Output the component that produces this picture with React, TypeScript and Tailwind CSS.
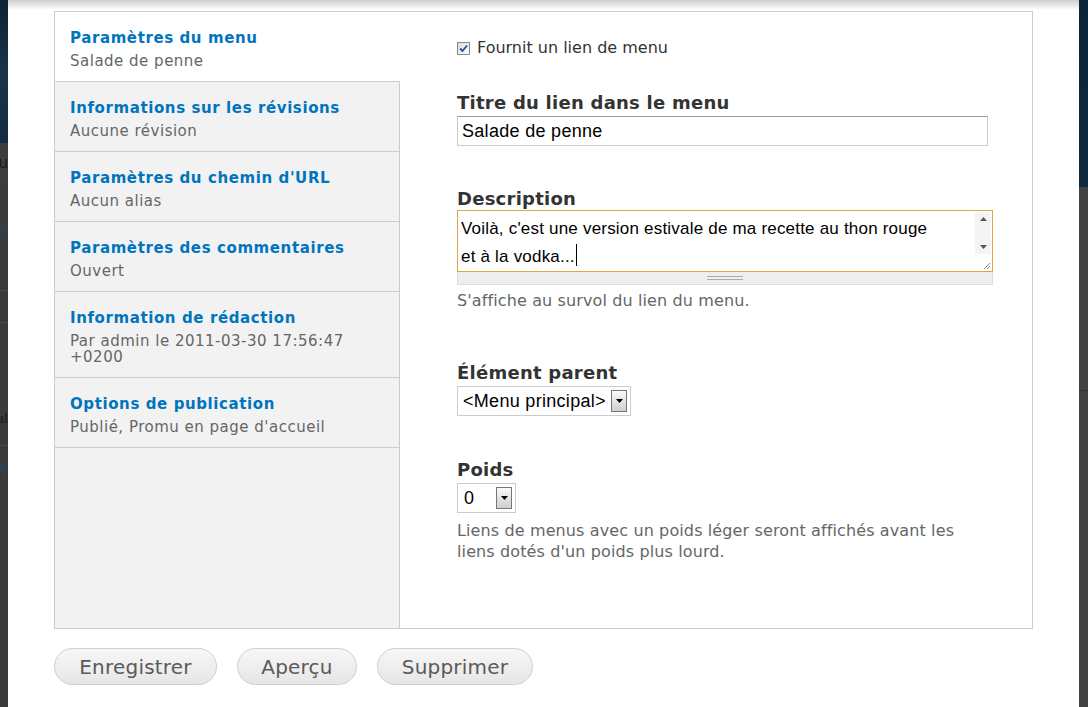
import React from "react";

const tabs = [
  { title: "Paramètres du menu", summary: ["Salade de penne"], active: true },
  { title: "Informations sur les révisions", summary: ["Aucune révision"] },
  { title: "Paramètres du chemin d'URL", summary: ["Aucun alias"] },
  { title: "Paramètres des commentaires", summary: ["Ouvert"] },
  { title: "Information de rédaction", summary: ["Par admin le 2011-03-30 17:56:47", "+0200"] },
  { title: "Options de publication", summary: ["Publié, Promu en page d'accueil"] },
];

function DropBtn() {
  return (
    <div className="flex h-[22px] w-[16px] items-center justify-center border border-[#777] bg-gradient-to-b from-[#fafafa] to-[#cfcfcf]">
      <svg width="7" height="4" viewBox="0 0 7 4">
        <path d="M0 0h7L3.5 4z" fill="#000" />
      </svg>
    </div>
  );
}

export default function App() {
  const sans = { fontFamily: '"DejaVu Sans", Verdana, sans-serif' };
  const arial = { fontFamily: '"Liberation Sans", Arial, sans-serif' };
  const serif = { fontFamily: '"Liberation Serif", serif' };
  return (
    <div className="flex h-[707px] w-[1088px] overflow-hidden" style={sans}>
      {/* left background strip */}
      <div className="flex w-[8px] flex-col overflow-hidden">
        <div className="h-[143px] bg-gradient-to-b from-[#0c2235] via-[#1a3347] to-[#132b40]" />
        <div className="flex h-[40px] items-center justify-end overflow-hidden bg-[#3d3d3d]">
          <span className="whitespace-nowrap text-[15px] text-[#1a1a1a]">Menu</span>
        </div>
        <div className="flex h-[107px] items-start justify-end overflow-hidden bg-[#3b3b3b] pt-[35px]">
          <span className="whitespace-nowrap text-[15px] text-[#1d4a6e]" style={serif}>Modifier</span>
        </div>
        <div className="h-[32px] border-t border-[#4a4a4a] bg-[#3b3b3b]" />
        <div className="flex h-[123px] items-end justify-end overflow-hidden border-t border-[#4a4a4a] bg-[#3b3b3b] pb-[16px]">
          <span className="whitespace-nowrap text-[15px] text-[#1a1a1a]" style={serif}>Sal</span>
        </div>
        <div className="flex flex-1 items-start justify-end overflow-hidden border-t border-[#4a4a4a] bg-[#3b3b3b] pt-[13px]">
          <span className="whitespace-nowrap text-[15px] text-[#1d4a6e]" style={serif}>A</span>
        </div>
      </div>

      {/* modal */}
      <div className="relative flex w-[1071px] flex-col bg-white pl-[46px] pt-[11px]">
        <div className="pointer-events-none absolute left-0 right-0 top-0 h-[10px] bg-gradient-to-b from-[#cfcfcf] to-white" />

        {/* vertical tabs box */}
        <div className="relative flex h-[618px] w-[979px] border border-[#cccccc] bg-white">
          {/* tab list */}
          <div className="flex w-[345px] flex-col bg-[#f2f2f2]">
            {tabs.map((t) => (
              <div
                key={t.title}
                className={
                  t.active
                    ? "border-b border-[#cccccc] bg-white pb-[12px] pl-[15px] pr-[10px] pt-[16px]"
                    : "border-b border-r border-[#cccccc] bg-[#f2f2f2] pb-[12px] pl-[15px] pr-[10px] pt-[16px]"
                }
              >
                <div className="whitespace-nowrap text-[15px] font-bold leading-[20px] tracking-[0.6px] text-[#0074bd]">{t.title}</div>
                <div className="mt-[5px] text-[15px] leading-[16px] tracking-[0.5px] text-[#666666]">
                  {t.summary.map((s) => (
                    <div key={s}>{s}</div>
                  ))}
                </div>
              </div>
            ))}
            <div className="flex-1 border-r border-[#cccccc]" />
          </div>

          {/* pane */}
          <div className="flex flex-1 flex-col pl-[57px] pt-[26px]">
            <div className="flex h-[20px] items-center gap-[7px]">
              <div className="flex h-[13px] w-[13px] items-center justify-center border border-[#8a8a8a] bg-gradient-to-br from-[#dcdcdc] to-[#fbfbfb]">
                <svg width="9" height="9" viewBox="0 0 9 9">
                  <path d="M1 4.5l2.5 2.5L8 1.5" stroke="#2a4a9c" strokeWidth="1.8" fill="none" />
                </svg>
              </div>
              <span className="text-[16px] text-[#333333]">Fournit un lien de menu</span>
            </div>

            <div className="mt-[34px] text-[18px] font-bold leading-[22px] tracking-[0.25px] text-[#333333]">Titre du lien dans le menu</div>
            <div
              className="mt-[2px] flex h-[30px] w-[531px] items-center border border-[#cccccc] border-t-[#999999] px-[4px] text-[18px] tracking-[0.3px] text-black"
              style={arial}
            >
              Salade de penne
            </div>

            <div className="mt-[42px] text-[18px] font-bold leading-[22px] tracking-[0.25px] text-[#333333]">Description</div>
            <div className="relative h-[62px] w-[536px] border border-[#e3a647]">
              <div className="pl-[3px] pr-[50px] pt-[4px] text-[17px] leading-[28px] tracking-[0.2px] text-black" style={arial}>
                Voilà, c'est une version estivale de ma recette au thon rouge et à la vodka...
                <span className="ml-[1px] inline-block h-[22px] w-[1px] bg-black align-[-4px]" />
              </div>
              {/* scrollbar */}
              <div className="absolute right-[1px] top-[1px] flex h-[42px] w-[16px] flex-col justify-between bg-[#f4f4f4]">
                <div className="flex h-[14px] items-center justify-center">
                  <svg width="7" height="4" viewBox="0 0 7 4">
                    <path d="M3.5 0L7 4H0z" fill="#555" />
                  </svg>
                </div>
                <div className="flex h-[14px] items-center justify-center">
                  <svg width="7" height="4" viewBox="0 0 7 4">
                    <path d="M0 0h7L3.5 4z" fill="#555" />
                  </svg>
                </div>
              </div>
              {/* resize handle */}
              <svg className="absolute bottom-[1px] right-[1px]" width="9" height="9" viewBox="0 0 9 9">
                <path d="M8 2L2 8M8 5L5 8" stroke="#888" strokeWidth="1" />
              </svg>
            </div>
            <div className="flex h-[13px] w-[536px] items-center justify-center border border-t-0 border-[#dddddd] bg-[#eeeeee]">
              <div className="flex w-[36px] flex-col gap-[2px]">
                <div className="h-[1px] bg-[#aaaaaa]" />
                <div className="h-[1px] bg-[#aaaaaa]" />
              </div>
            </div>
            <div className="mt-[6px] text-[16px] leading-[20px] tracking-[0.12px] text-[#666666]">S'affiche au survol du lien du menu.</div>

            <div className="mt-[51px] text-[18px] font-bold leading-[22px] tracking-[0.25px] text-[#333333]">Élément parent</div>
            <div
              className="mt-[2px] flex h-[30px] w-[174px] items-center justify-between border border-[#cccccc] pl-[5px] pr-[3px] text-[18px] tracking-[0.3px] text-black"
              style={arial}
            >
              <span className="whitespace-nowrap">&lt;Menu principal&gt;</span>
              <DropBtn />
            </div>

            <div className="mt-[43px] text-[18px] font-bold leading-[22px] tracking-[0.25px] text-[#333333]">Poids</div>
            <div
              className="mt-[2px] flex h-[30px] w-[59px] items-center justify-between border border-[#cccccc] pl-[6px] pr-[3px] text-[18px] text-black"
              style={arial}
            >
              <span>0</span>
              <DropBtn />
            </div>
            <div className="mt-[7px] w-[540px] text-[16px] leading-[21px] tracking-[0.12px] text-[#666666]">
              Liens de menus avec un poids léger seront affichés avant les
              <br />
              liens dotés d'un poids plus lourd.
            </div>
          </div>
        </div>

        {/* buttons */}
        <div className="mt-[19px] flex gap-[20px]">
          {[
            ["Enregistrer", "w-[163px]"],
            ["Aperçu", "w-[120px]"],
            ["Supprimer", "w-[156px]"],
          ].map(([label, w]) => (
            <div
              key={label}
              className={`${w} flex h-[37px] items-center justify-center rounded-full border border-[#cfcfcf] bg-gradient-to-b from-[#f7f7f7] to-[#e6e6e6] text-[20px] tracking-[0.2px] text-[#5a5a5a]`}
            >
              {label}
            </div>
          ))}
        </div>
      </div>

      {/* right background strip */}
      <div className="flex w-[9px] flex-col">
        <div className="h-[187px] bg-gradient-to-b from-[#0d2438] to-[#11293d]" />
        <div className="h-[203px] bg-[#434343]" />
        <div className="flex-1 border-t border-[#333333] bg-[#434343]" />
      </div>
    </div>
  );
}
